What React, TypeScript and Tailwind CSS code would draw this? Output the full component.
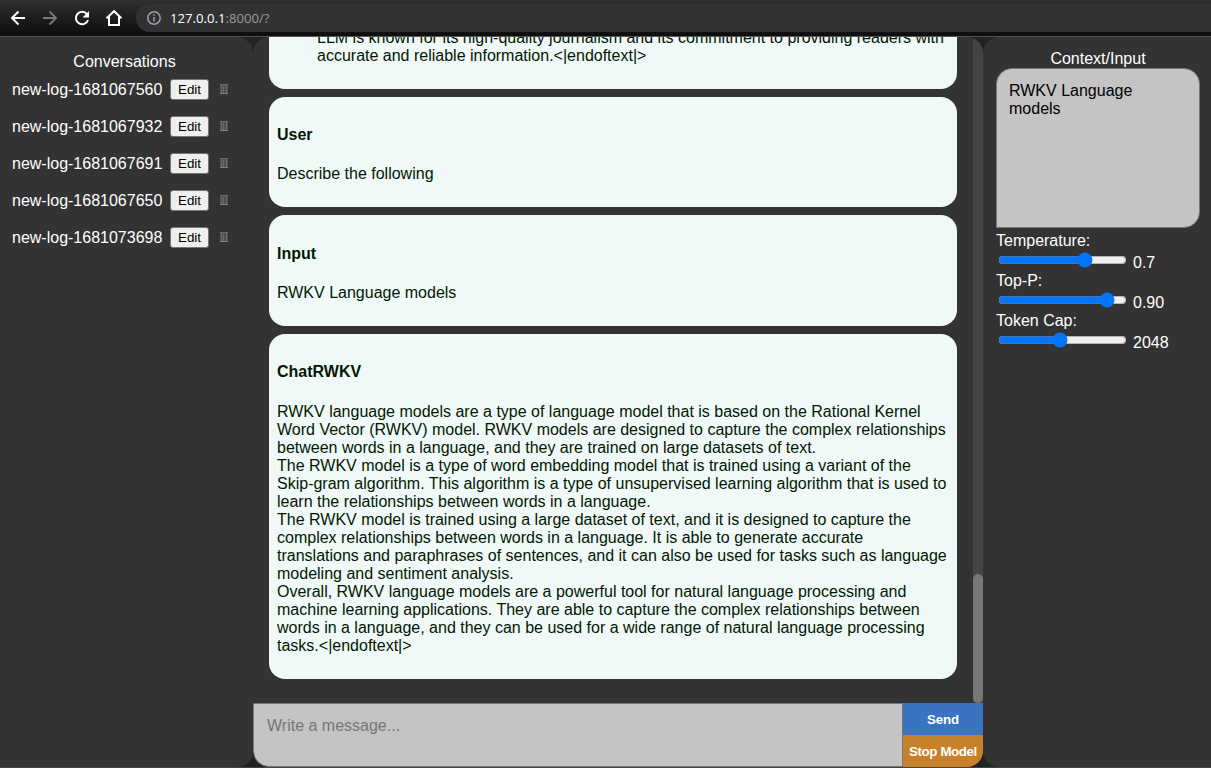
import React from "react";

const logs = ["new-log-1681067560", "new-log-1681067932", "new-log-1681067691", "new-log-1681067650", "new-log-1681073698"];

function TrashIcon() {
  return (
    <svg width="8" height="11" viewBox="0 0 8 11" className="ml-[11px]" shapeRendering="crispEdges">
      <path d="M0 0h8v10H0z" fill="#505050" />
      <path d="M0 0h8v1H0zM1 1h1v8H1zM3 2h1v7H3zM6 1h1v8H6z" fill="#6b6b6b" />
      <path d="M0 9h8v1H0z" fill="#808080" />
    </svg>
  );
}

function Toolbar() {
  return (
    <header className="flex h-[37px] shrink-0 border-b border-[#555] bg-linear-to-b from-[#303030] to-[#0d0d0d]">
      <svg width="136" height="36" viewBox="0 0 136 36" fill="none" strokeWidth="2" className="shrink-0">
        <path d="M25 18H12.5M18.5 11.5L12 18l6.5 6.5" stroke="#fff" />
        <path d="M43 18h12.5M49.5 11.5L56 18l-6.5 6.5" stroke="#777" />
        <path d="M87 14.2A6.2 6.2 0 1 0 88 20" stroke="#fff" />
        <path d="M89 11v6.5h-6.5z" fill="#fff" />
        <path d="M106.5 18.3L114 11.2l7.500 7.100M109 16.500V25h10v-8.500" stroke="#fff" />
      </svg>
      <div className="mt-1 flex h-7 flex-1 items-center rounded-l-full bg-[#323232] pl-[11px]">
        <svg width="14" height="14" viewBox="0 0 14 14" fill="none" stroke="#9aa0a6" strokeWidth="1.5">
          <circle cx="7" cy="7" r="6.2" />
          <path d="M7 6v4.500M7 3.300v1.500" />
        </svg>
        <span className="ml-[9px] font-['Open_Sans',sans-serif] text-[13.15px] text-[#9a9a9a]">
          <span className="text-white">127.0.0.1</span>:8000/?
        </span>
      </div>
    </header>
  );
}

function Message({ name, children }: { name: string; children: React.ReactNode }) {
  return (
    <article className="mt-2 shrink-0 rounded-2xl bg-[#f1f8f8] p-2 text-[#001800]">
      <h4 className="my-[21.28px] font-bold">{name}</h4>
      <div className="mb-4">{children}</div>
    </article>
  );
}

function Range({ label, value, text, max }: { label: string; value: number; text: string; max: number }) {
  return (
    <div className="h-10">
      <div className="h-[18px]">{label}</div>
      <div className="flex h-[22px]">
        <input type="range" min={0} max={max} step="any" defaultValue={value} className="m-[2px] h-4 w-[129px]" />
        <span className="ml-[4px] mt-1">{text}</span>
      </div>
    </div>
  );
}

export default function App() {
  return (
    <div className="flex h-[768px] w-[1211px] flex-col overflow-hidden bg-[#222] font-['Liberation_Sans',Arial,sans-serif] text-[16px] leading-[18px]">
      <Toolbar />
      <main className="flex h-[730px] shrink-0">
        <aside className="w-[253px] rounded-r-2xl bg-[#333] pt-4 text-white">
          <h2 className="pr-[4px] text-center">Conversations</h2>
          {logs.map((log) => (
            <div key={log} className="flex h-[37px] items-center pl-3">
              <span className="w-[158px]">{log}</span>
              <button className="h-[21px] w-[39px] rounded-[3px] border border-[#767676] bg-[#efefef] text-[13.33px] leading-[15px] text-black">Edit</button>
              <TrashIcon />
            </div>
          ))}
        </aside>
        <section className="flex w-[730px] flex-col overflow-hidden rounded-2xl bg-[#333]">
          <div className="flex h-[666px]">
            <div className="flex w-[720px] flex-col justify-end overflow-hidden px-4 pb-[24.47px]">
              <article className="shrink-0 rounded-2xl bg-[#f1f8f8] py-2 pr-2 pl-12 text-[#001800]">
                <div className="mb-4">
                  LLM is known for its high-quality journalism and its commitment to providing readers with<br />
                  accurate and reliable information.&lt;|endoftext|&gt;
                </div>
              </article>
              <Message name="User">Describe the following</Message>
              <Message name="Input">RWKV Language models</Message>
              <Message name="ChatRWKV">
                RWKV language models are a type of language model that is based on the Rational Kernel<br />
                Word Vector (RWKV) model. RWKV models are designed to capture the complex relationships<br />
                between words in a language, and they are trained on large datasets of text.<br />
                The RWKV model is a type of word embedding model that is trained using a variant of the<br />
                Skip-gram algorithm. This algorithm is a type of unsupervised learning algorithm that is used to<br />
                learn the relationships between words in a language.<br />
                The RWKV model is trained using a large dataset of text, and it is designed to capture the<br />
                complex relationships between words in a language. It is able to generate accurate<br />
                translations and paraphrases of sentences, and it can also be used for tasks such as language<br />
                modeling and sentiment analysis.<br />
                Overall, RWKV language models are a powerful tool for natural language processing and<br />
                machine learning applications. They are able to capture the complex relationships between<br />
                words in a language, and they can be used for a wide range of natural language processing<br />
                tasks.&lt;|endoftext|&gt;
              </Message>
            </div>
            <div className="flex w-[10px] flex-col justify-end bg-[#444]">
              <div className="h-[129px] rounded-[5px] bg-[#777]" />
            </div>
          </div>
          <div className="flex h-16">
            <textarea placeholder="Write a message..." className="h-16 w-[650px] resize-none rounded-bl-2xl border border-[#767676] bg-[#c4c4c4] px-[13px] py-[13px] text-black placeholder:text-[#757575]" />
            <div className="flex w-20 flex-col text-[13.33px] font-bold tracking-[-0.4px] whitespace-nowrap text-white">
              <button className="h-8 bg-[#3a73bf] pt-px tracking-[-0.1px]">Send</button>
              <button className="h-8 bg-[#c5822a] pt-px">Stop Model</button>
            </div>
          </div>
        </section>
        <aside className="w-[228px] rounded-l-2xl bg-[#333] px-[13px] pt-[13px] text-white">
          <h2 className="pl-[2px] text-center">Context/Input</h2>
          <textarea defaultValue="RWKV Language models" className="block h-[160px] w-[204px] resize-none rounded-2xl rounded-bl-none border border-[#767676] bg-[#c4c4c4] px-3 py-[13px] text-black" />
          <div className="mt-1">
            <Range label="Temperature:" value={0.7} max={1} text="0.7" />
            <Range label="Top-P:" value={0.893} max={1} text="0.90" />
            <Range label="Token Cap:" value={0.478} max={1} text="2048" />
          </div>
        </aside>
      </main>
      <div className="h-px bg-[#444]" />
    </div>
  );
}
